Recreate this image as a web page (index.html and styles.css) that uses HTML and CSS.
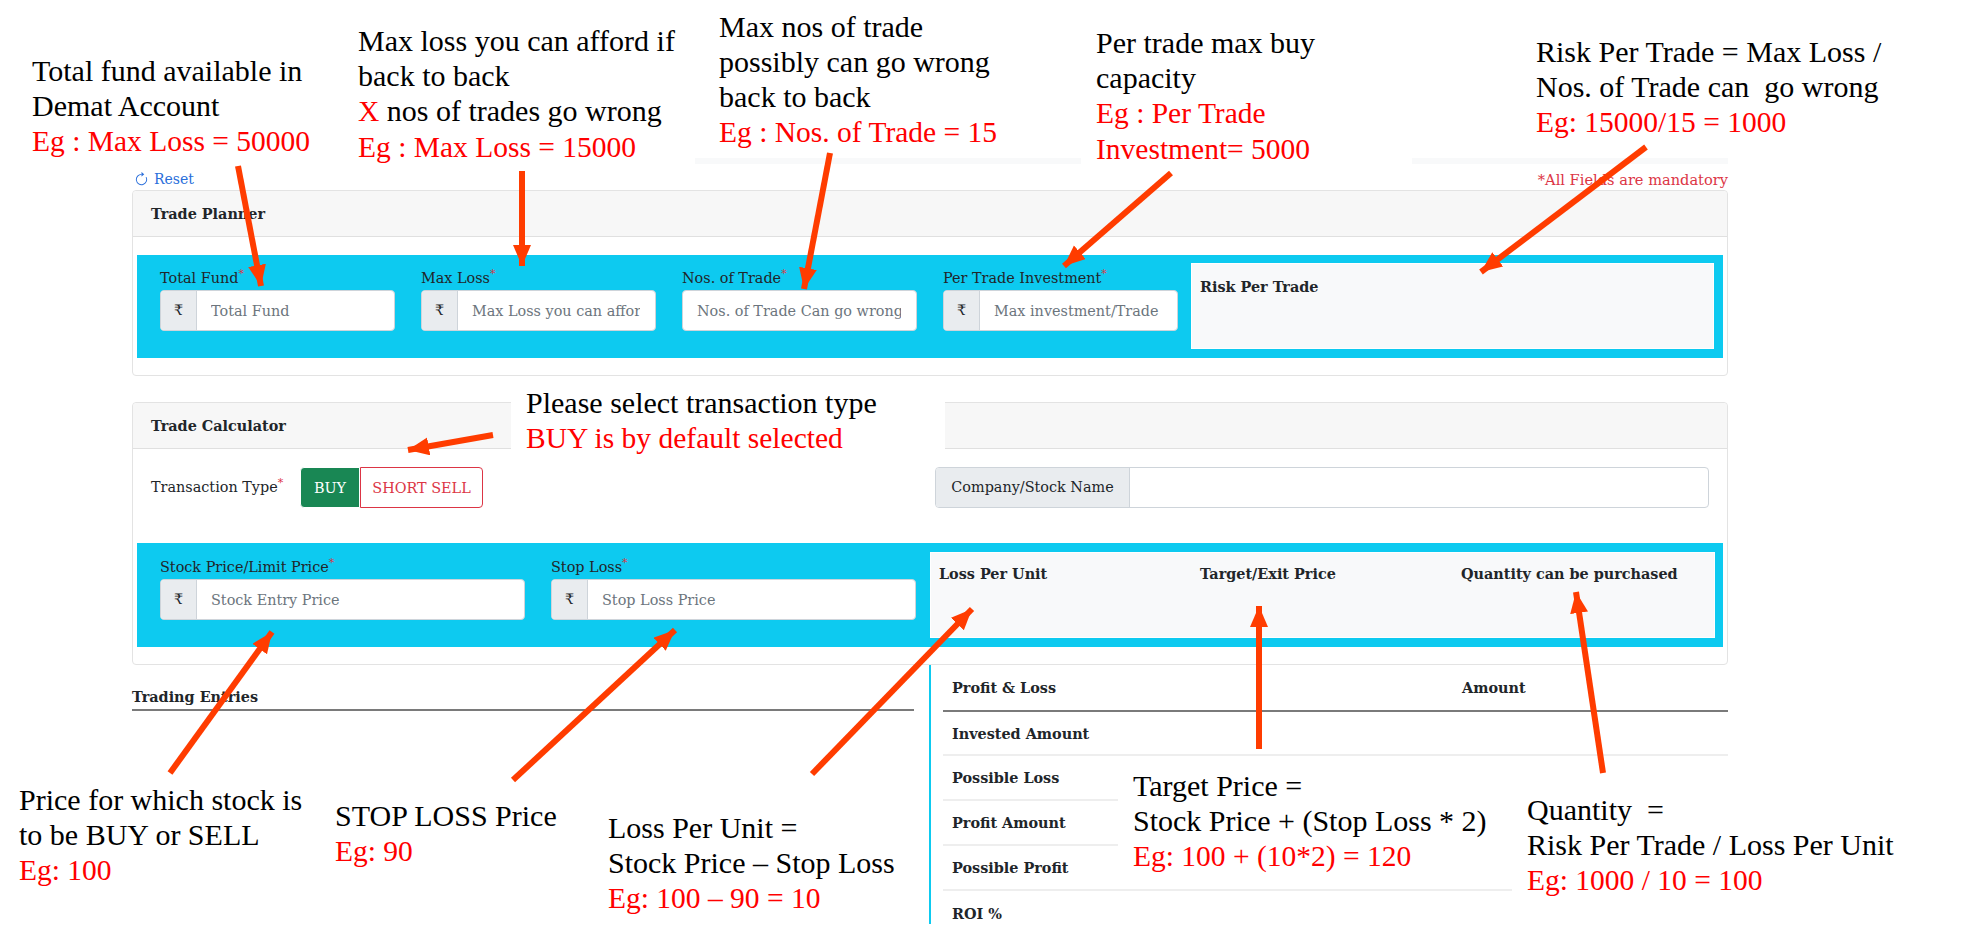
FILE: index.html
```html
<!DOCTYPE html>
<html lang="en">

<head>
    <meta charset="UTF-8">
    <title>Trade Planner</title>
    <link rel="stylesheet" href="styles.css">
</head>

<body>

    <div class="page">

        <div class="toolbar">
            <a class="reset">
                <svg class="reset-icon" viewBox="0 0 16 16" fill="currentColor">
                    <path fill-rule="evenodd" d="M8 3a5 5 0 1 0 4.546 2.914.5.5 0 0 1 .908-.417A6 6 0 1 1 8 2v1z" />
                    <path d="M8 4.466V.534a.25.25 0 0 1 .41-.192l2.36 1.966c.12.1.12.284 0 .384L8.41 4.658A.25.25 0 0 1 8 4.466z" />
                </svg>
                Reset
            </a>
            <span class="mandatory">*All Fields are mandatory</span>
        </div>

        <section class="card planner">
            <h2 class="card-header">Trade Planner</h2>
            <div class="card-body">
                <div class="band">
                    <div class="field">
                        <label>Total Fund<sup>*</sup></label>
                        <div class="input-group">
                            <span class="addon">₹</span>
                            <input placeholder="Total Fund">
                        </div>
                    </div>
                    <div class="field">
                        <label>Max Loss<sup>*</sup></label>
                        <div class="input-group">
                            <span class="addon">₹</span>
                            <input placeholder="Max Loss you can afford">
                        </div>
                    </div>
                    <div class="field">
                        <label>Nos. of Trade<sup>*</sup></label>
                        <div class="input-group">
                            <input placeholder="Nos. of Trade Can go wrong">
                        </div>
                    </div>
                    <div class="field">
                        <label>Per Trade Investment<sup>*</sup></label>
                        <div class="input-group">
                            <span class="addon">₹</span>
                            <input placeholder="Max investment/Trade">
                        </div>
                    </div>
                    <div class="result">
                        <b>Risk Per Trade</b>
                    </div>
                </div>
            </div>
        </section>

        <section class="card calculator">
            <h2 class="card-header">Trade Calculator</h2>
            <div class="card-body">
                <div class="type-row">
                    <div class="type-left">
                        <label>Transaction Type<sup>*</sup></label>
                        <div class="btn-group">
                            <button class="btn-buy">BUY</button>
                            <button class="btn-sell">SHORT SELL</button>
                        </div>
                    </div>
                    <div class="input-group company">
                        <span class="addon">Company/Stock Name</span>
                        <input>
                    </div>
                </div>
                <div class="band">
                    <div class="field">
                        <label>Stock Price/Limit Price<sup>*</sup></label>
                        <div class="input-group">
                            <span class="addon">₹</span>
                            <input placeholder="Stock Entry Price">
                        </div>
                    </div>
                    <div class="field">
                        <label>Stop Loss<sup>*</sup></label>
                        <div class="input-group">
                            <span class="addon">₹</span>
                            <input placeholder="Stop Loss Price">
                        </div>
                    </div>
                    <div class="result result-three">
                        <b>Loss Per Unit</b>
                        <b>Target/Exit Price</b>
                        <b>Quantity can be purchased</b>
                    </div>
                </div>
            </div>
        </section>

        <div class="lower">
            <div class="entries">
                <h3>Trading Entries</h3>
            </div>
            <div class="summary">
                <table>
                    <tr class="head">
                        <th>Profit &amp; Loss</th>
                        <th>Amount</th>
                    </tr>
                    <tr class="first">
                        <th>Invested Amount</th>
                        <td></td>
                    </tr>
                    <tr>
                        <th>Possible Loss</th>
                        <td></td>
                    </tr>
                    <tr>
                        <th>Profit Amount</th>
                        <td></td>
                    </tr>
                    <tr>
                        <th>Possible Profit</th>
                        <td></td>
                    </tr>
                    <tr class="last">
                        <th>ROI %</th>
                        <td></td>
                    </tr>
                </table>
            </div>
        </div>

    </div>

    <!-- notes pasted over the screen -->
    <div class="strip strip-a"></div>
    <div class="strip strip-b"></div>

    <div class="note n-fund">Total fund available in<br>Demat Account<br><em>Eg : Max Loss = 50000</em></div>
    <div class="note n-loss">Max loss you can afford if<br>back to back<br><em>X</em> nos of trades go wrong<br><em>Eg : Max Loss = 15000</em></div>
    <div class="note n-nos">Max nos of trade<br>possibly can go wrong<br>back to back<br><em>Eg : Nos. of Trade = 15</em></div>
    <div class="note n-per">Per trade max buy<br>capacity<br><em>Eg : Per Trade<br>Investment= 5000</em></div>
    <div class="note n-risk">Risk Per Trade = Max Loss /<br>Nos. of Trade can &nbsp;go wrong<br><em>Eg: 15000/15 = 1000</em></div>
    <div class="note n-type">Please select transaction type<br><em>BUY is by default selected</em></div>
    <div class="note n-price">Price for which stock is<br>to be BUY or SELL<br><em>Eg: 100</em></div>
    <div class="note n-stop">STOP LOSS Price<br><em>Eg: 90</em></div>
    <div class="note n-unit">Loss Per Unit =<br>Stock Price – Stop Loss<br><em>Eg: 100 – 90 = 10</em></div>
    <div class="note n-target">Target Price =<br>Stock Price + (Stop Loss * 2)<br><em>Eg: 100 + (10*2) = 120</em></div>
    <div class="note n-qty">Quantity &nbsp;=<br>Risk Per Trade / Loss Per Unit<br><em>Eg: 1000 / 10 = 100</em></div>

    <svg class="arrows" viewBox="0 0 1966 932">
        <defs>
            <marker id="head" markerUnits="userSpaceOnUse" markerWidth="22" markerHeight="20" refX="21" refY="9" orient="auto">
                <path d="M0 0 L21 9 L0 18 Z" fill="#ff3c00" />
            </marker>
        </defs>
        <line x1="238" y1="166" x2="261" y2="286" />
        <line x1="522" y1="171" x2="522" y2="266" />
        <line x1="830" y1="153" x2="804" y2="289" />
        <line x1="1171" y1="173" x2="1064" y2="266" />
        <line x1="1646" y1="147" x2="1481" y2="272" />
        <line x1="493" y1="435" x2="408" y2="450" />
        <line x1="170" y1="773" x2="272" y2="632" />
        <line x1="513" y1="780" x2="675" y2="630" />
        <line x1="812" y1="774" x2="972" y2="609" />
        <line x1="1259" y1="749" x2="1259" y2="606" />
        <line x1="1603" y1="773" x2="1576" y2="592" />
    </svg>

</body>

</html>
```

FILE: styles.css
```css
* {
    box-sizing: border-box;
}

body {
    margin: 0;
    background: #fff;
    color: #212529;
    font-family: "DejaVu Serif", "Liberation Serif", serif;
    font-size: 14.4px;
}

.page {
    width: 1596px;
    margin-left: 132px;
    padding-top: 168px;
}

.toolbar {
    display: flex;
    justify-content: space-between;
    align-items: center;
    height: 22px;
    font-size: 14px;
}

.reset {
    display: flex;
    align-items: center;
    gap: 5px;
    margin-left: 2px;
    color: #2a6fdb;
}

.reset-icon {
    width: 15px;
    height: 15px;
}

.mandatory {
    color: #dc3545;
    font-size: 14.6px;
}

/* cards */
.card {
    border: 1px solid #e3e3e3;
    border-radius: 4px;
}

.card-header {
    margin: 0;
    height: 46px;
    padding-left: 18px;
    background: #f7f7f7;
    border-bottom: 1px solid #e0e0e0;
    border-radius: 4px 4px 0 0;
    font-size: 14.4px;
    line-height: 45px;
}

.card-body {
    padding: 18px 4px;
}

.planner {
    height: 186px;
}

.calculator {
    height: 263px;
    margin-top: 26px;
}

.band {
    display: flex;
    align-items: flex-start;
    padding: 8px 9px 9px 23px;
    background: #0dcaf0;
}

.field {
    flex: none;
    padding-top: 4px;
}

.planner .field {
    width: 235px;
    margin-right: 26px;
}

.planner .field:nth-child(4) {
    margin-right: 13px;
}

.calculator .band {
    padding-top: 9px;
    padding-right: 8px;
}

.calculator .field {
    width: 365px;
    margin-right: 26px;
}

.calculator .field:nth-child(2) {
    margin-right: 14px;
}

label {
    display: block;
    height: 20px;
    margin-bottom: 3px;
    line-height: 22px;
    white-space: nowrap;
}

sup {
    color: #dc3545;
    font-size: 11px;
    line-height: 0;
}

.input-group {
    display: flex;
    height: 41px;
    background: #fff;
    border: 1px solid #ced4da;
    border-radius: 4px;
    overflow: hidden;
}

.addon {
    flex: none;
    width: 36px;
    background: #e9ecef;
    border-right: 1px solid #ced4da;
    line-height: 39px;
    text-align: center;
}

input {
    flex: 1;
    min-width: 0;
    padding: 0 15px 0 14px;
    border: 0;
    background: transparent;
    color: #212529;
    font: inherit;
}

input::placeholder {
    color: #6c757d;
    opacity: 1;
}

.result {
    flex: 1;
    height: 86px;
    padding: 14px 8px;
    background: #f8f9fa;
    border: 1px solid #fff;
}

.result-three {
    display: grid;
    grid-template-columns: 261px 261px 1fr;
    padding-top: 12px;
}

/* transaction row */
.type-row {
    display: flex;
    justify-content: space-between;
    margin-bottom: 35px;
    padding: 0 14px;
}

.type-left {
    display: flex;
}

.type-left label {
    width: 149px;
    margin: 9px 0 0;
}

.btn-group {
    display: flex;
    width: 183px;
    height: 41px;
}

.btn-group button {
    border: 1px solid;
    font: inherit;
    padding: 0;
}

.btn-buy {
    width: 60px;
    background: #198754;
    border-color: #198754;
    border-radius: 4px 0 0 4px;
    color: #fff;
}

.btn-sell {
    flex: 1;
    background: #fff;
    border-color: #dc3545;
    border-radius: 0 4px 4px 0;
    color: #dc3545;
}

.company {
    width: 774px;
}

.company .addon {
    width: 194px;
}

/* bottom part */
.lower {
    display: flex;
    height: 259px;
}

.entries {
    width: 782px;
    height: 46px;
    border-bottom: 2px solid #7a7a7a;
}

.entries h3 {
    margin: 0;
    font-size: 14.4px;
    line-height: 20px;
    padding-top: 22px;
}

.summary {
    width: 799px;
    margin-left: 15px;
    padding-left: 12px;
    border-left: 2px solid #0dcaf0;
}

table {
    width: 100%;
    border-collapse: collapse;
    table-layout: fixed;
}

tr {
    height: 45px;
    border-bottom: 2px solid #eee;
}

tr.head {
    height: 46px;
    border-bottom: 2px solid #7a7a7a;
}

tr.first {
    height: 44px;
}

tr.last {
    border-bottom: 0;
}

th {
    padding: 0 9px;
    font-size: 14.4px;
    text-align: left;
    white-space: nowrap;
}

th:first-child {
    width: 510px;
}

/* notes and arrows lying over the screen */
.strip {
    position: absolute;
    top: 158px;
    height: 6px;
    background: #f8f9fa;
}

.strip-a {
    left: 695px;
    width: 386px;
}

.strip-b {
    left: 1412px;
    width: 316px;
}

.note {
    position: absolute;
    color: #000;
    font-family: "Liberation Serif", serif;
    font-size: 30px;
    line-height: 35px;
    white-space: nowrap;
}

.note em {
    color: #f00;
    font-size: 29.5px;
    font-style: normal;
}

.n-fund { left: 32px; top: 53px; }
.n-loss { left: 358px; top: 23px; }
.n-nos { left: 719px; top: 9px; }
.n-per { left: 1096px; top: 25px; }
.n-risk { left: 1536px; top: 34px; }
.n-price { left: 19px; top: 782px; }
.n-stop { left: 335px; top: 798px; }
.n-unit { left: 608px; top: 810px; }

.n-type {
    left: 511px;
    top: 385px;
    width: 434px;
    padding-left: 15px;
    background: #fff;
}

.n-target {
    left: 1118px;
    top: 768px;
    width: 394px;
    padding-left: 15px;
    background: #fff;
}

.n-qty {
    left: 1512px;
    top: 792px;
    width: 454px;
    padding-left: 15px;
    background: #fff;
}

.arrows {
    position: absolute;
    left: 0;
    top: 0;
    width: 1966px;
    height: 932px;
    pointer-events: none;
}

.arrows line {
    stroke: #ff3c00;
    stroke-width: 6;
    marker-end: url(#head);
}
```
